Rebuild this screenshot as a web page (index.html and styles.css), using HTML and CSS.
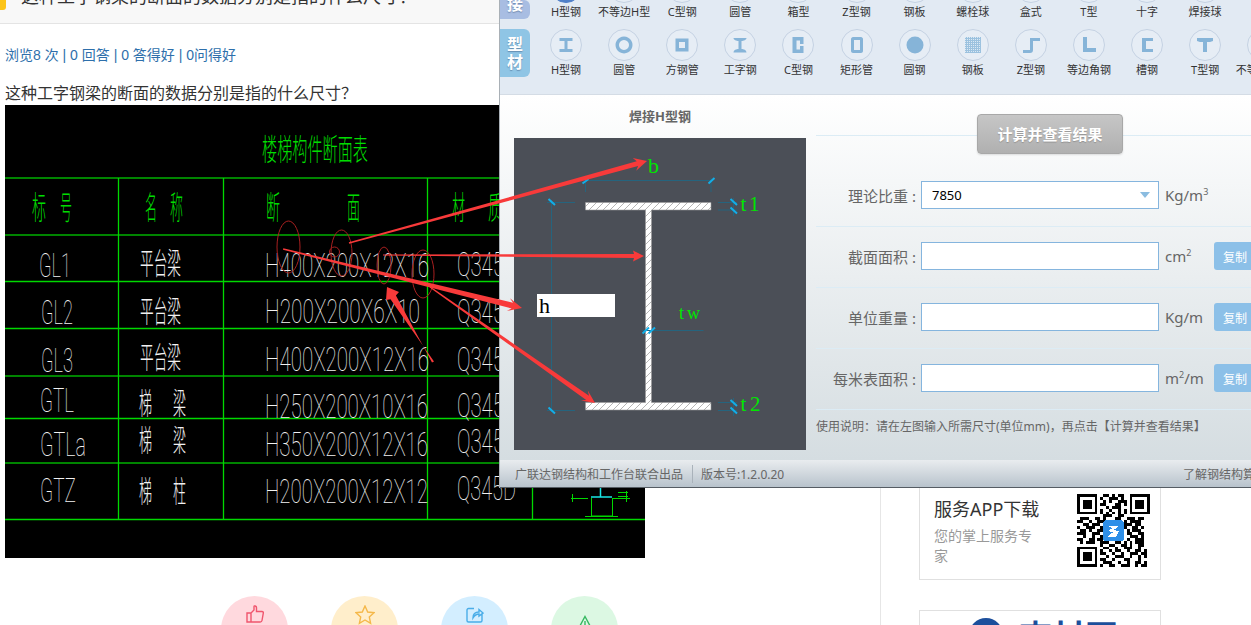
FILE: index.html
```html
<!DOCTYPE html>
<html lang="zh-CN">
<head>
    <meta charset="UTF-8">
    <meta name="viewport" content="width=device-width, initial-scale=1.0">
    <title>焊接H型钢</title>
    <link rel="stylesheet" href="styles.css">
</head>
<body>
    <div class="page">
        <div class="main">
            <div class="q-head">
                <span class="q-flag"></span>
                <span class="q-title">这种工字钢梁的断面的数据分别是指的什么尺寸？</span>
            </div>
            <div class="stats">浏览8 次 | 0 回答 | 0 答得好 | 0问得好</div>
            <p class="question">这种工字钢梁的断面的数据分别是指的什么尺寸？</p>

            <svg class="cad" viewBox="5 105 640 453" width="640" height="453">
                <rect x="5" y="105" width="640" height="453" fill="#000"/>
                <text class="cad-green" x="262" y="160" font-size="30" textLength="106" lengthAdjust="spacingAndGlyphs">楼梯构件断面表</text>

                <g class="line-dark">
                    <path d="M5 178H645M5 235H645M5 376H645M5 463H645"/>
                </g>
                <g class="line-bright">
                    <path d="M5 281.500H645M5 328.500H645M5 418.500H645M5 519.500H645"/>
                    <path d="M118.500 178V519M223.500 178V519M427.500 178V519M532.500 178V519"/>
                </g>

                <g class="cad-green" font-size="32">
                    <text x="32" y="219" textLength="14" lengthAdjust="spacingAndGlyphs">标</text>
                    <text x="60" y="219" textLength="12" lengthAdjust="spacingAndGlyphs">号</text>
                    <text x="145" y="219" textLength="12" lengthAdjust="spacingAndGlyphs">名</text>
                    <text x="170" y="219" textLength="13" lengthAdjust="spacingAndGlyphs">称</text>
                    <text x="266" y="219" textLength="14" lengthAdjust="spacingAndGlyphs">断</text>
                    <text x="347" y="219" textLength="13" lengthAdjust="spacingAndGlyphs">面</text>
                    <text x="452" y="219" textLength="13" lengthAdjust="spacingAndGlyphs">材</text>
                    <text x="488" y="219" textLength="15" lengthAdjust="spacingAndGlyphs">质</text>
                </g>

                <g class="cad-white" font-size="33">
                    <text x="39" y="277" textLength="32" lengthAdjust="spacingAndGlyphs">GL1</text>
                    <text x="41" y="324" textLength="32" lengthAdjust="spacingAndGlyphs">GL2</text>
                    <text x="41" y="372" textLength="32" lengthAdjust="spacingAndGlyphs">GL3</text>
                    <text x="40" y="412" textLength="34" lengthAdjust="spacingAndGlyphs">GTL</text>
                    <text x="40" y="456" textLength="46" lengthAdjust="spacingAndGlyphs">GTLa</text>
                    <text x="40" y="502" textLength="36" lengthAdjust="spacingAndGlyphs">GTZ</text>

                    <text x="265" y="277" textLength="164" lengthAdjust="spacingAndGlyphs">H400X200X12X16</text>
                    <text x="265" y="323" textLength="155" lengthAdjust="spacingAndGlyphs">H200X200X6X10</text>
                    <text x="265" y="371" textLength="164" lengthAdjust="spacingAndGlyphs">H400X200X12X16</text>
                    <text x="265" y="418" textLength="163" lengthAdjust="spacingAndGlyphs">H250X200X10X16</text>
                    <text x="265" y="456" textLength="163" lengthAdjust="spacingAndGlyphs">H350X200X12X16</text>
                    <text x="265" y="503" textLength="163" lengthAdjust="spacingAndGlyphs">H200X200X12X12</text>

                    <text x="457" y="276" textLength="59" lengthAdjust="spacingAndGlyphs">Q345B</text>
                    <text x="457" y="323" textLength="59" lengthAdjust="spacingAndGlyphs">Q345B</text>
                    <text x="457" y="371" textLength="59" lengthAdjust="spacingAndGlyphs">Q345B</text>
                    <text x="457" y="417" textLength="59" lengthAdjust="spacingAndGlyphs">Q345B</text>
                    <text x="457" y="453" textLength="59" lengthAdjust="spacingAndGlyphs">Q345B</text>
                    <text x="457" y="500" textLength="59" lengthAdjust="spacingAndGlyphs">Q345D</text>
                </g>

                <g class="cad-white cad-cn" font-size="30">
                    <text x="140" y="274" textLength="41" lengthAdjust="spacingAndGlyphs">平台梁</text>
                    <text x="140" y="322" textLength="41" lengthAdjust="spacingAndGlyphs">平台梁</text>
                    <text x="140" y="368" textLength="41" lengthAdjust="spacingAndGlyphs">平台梁</text>
                    <text x="139" y="414" textLength="13" lengthAdjust="spacingAndGlyphs">梯</text>
                    <text x="173" y="414" textLength="13" lengthAdjust="spacingAndGlyphs">梁</text>
                    <text x="139" y="451" textLength="13" lengthAdjust="spacingAndGlyphs">梯</text>
                    <text x="173" y="451" textLength="13" lengthAdjust="spacingAndGlyphs">梁</text>
                    <text x="139" y="502" textLength="13" lengthAdjust="spacingAndGlyphs">梯</text>
                    <text x="173" y="502" textLength="13" lengthAdjust="spacingAndGlyphs">柱</text>
                </g>

                <path class="line-thin" d="M571 498.500H588M612 498.500H630M591.500 498V516H612.500V498M585 516.500H618M572.500 494V502M626.500 491V502M618 492.500H628M618 496.500H628"/>
                <path d="M591 497H612M600.500 488V497" stroke="#19e6e6" stroke-width="1.500" fill="none"/>
            </svg>

            <div class="actions">
                <div class="act act-like">
                    <svg viewBox="0 0 18 18" width="18" height="18"><path d="M1 8h4v9H1zM5 8l3-3V1.500c0-1 2.500-1 2.500 1V6.500H16c1 0 1.500 .8 1.300 1.700l-1.300 7.300c-.2 1-1 1.500-1.800 1.500H5"/></svg>
                </div>
                <div class="act act-star">
                    <svg viewBox="0 0 20 20" width="20" height="20"><path d="M10 1l2.700 6 6.300 .7-4.700 4.300 1.300 6.300-5.600-3.300-5.600 3.300 1.300-6.300L1 7.700 7.300 7z"/></svg>
                </div>
                <div class="act act-share">
                    <svg viewBox="0 0 18 16" width="18" height="16"><path d="M8 1.500H2.500c-.8 0-1.500 .7-1.500 1.500v10.500c0 .8 .7 1.500 1.500 1.500h12c.8 0 1.500-.7 1.500-1.500V7M7 11c0-4 2.500-6 6-6V2.500L17 6l-4 3V7c-2.500 0-4.500 1.500-6 4z"/></svg>
                </div>
                <div class="act act-warn">
                    <svg viewBox="0 0 16 16" width="16" height="16"><path d="M8 1.500L15 14.500H1zM8 6v5M8 12v1"/></svg>
                </div>
            </div>
        </div>

        <div class="side">
            <div class="app-card">
                <div class="app-text">
                    <h3>服务APP下载</h3>
                    <p>您的掌上服务专家</p>
                </div>
                <svg class="qr" viewBox="0 0 25 25" width="73" height="73">
                    <path fill-rule="evenodd" d="M0 0h7v7h-7zM1 1v5h5v-5zM2 2h3v3h-3zM18 0h7v7h-7zM19 1v5h5v-5zM20 2h3v3h-3zM0 18h7v7h-7zM1 19v5h5v-5zM2 20h3v3h-3z"/>
                    <path class="qr-bits" d="M9 .5h2m1 0h1m1 0h2M8 1.500h1m2 0h3m1 0h1M9 2.500h1m1 0h1m2 0h3M8 3.500h2m3 0h2m1 0h1M10 4.500h1m1 0h3M8 5.500h1m2 0h1m2 0h1m1 0h1M8 6.500h1m1 0h1m1 0h1m1 0h1m1 0h1M9 7.500h3m2 0h2M1 8.500h3m2 0h2m1 0h1m3 0h2m2 0h3m1 0h2M0 9.500h2m2 0h1m2 0h3m3 0h1m2 0h1m1 0h4M2 10.500h2m1 0h3m2 0h2m4 0h3m1 0h2M0 11.500h1m2 0h3m2 0h1m7 0h1m2 0h2m1 0h1M1 12.500h2m1 0h1m2 0h2m8 0h1m1 0h3M0 13.500h3m2 0h3m9 0h2m2 0h2M2 14.500h1m2 0h1m2 0h2m8 0h3m1 0h1M0 15.500h2m2 0h2m1 0h2m8 0h1m2 0h3M1 16.500h1m1 0h3m2 0h3m2 0h2m1 0h1m1 0h1m1 0h3M8 17.500h1m2 0h2m2 0h2m1 0h1m2 0h2M9 18.500h2m2 0h1m2 0h3m2 0h1M8 19.500h1m2 0h1m1 0h2m2 0h1m2 0h2m1 0h1M8 20.500h2m2 0h1m2 0h1m2 0h3m1 0h2M10 21.500h1m2 0h3m2 0h1m2 0h1m1 0h1M8 22.500h2m2 0h1m3 0h2m3 0h1M9 23.500h3m2 0h1m2 0h1m2 0h2m1 0h1M8 24.500h1m2 0h2m2 0h3m2 0h1m1 0h2"/>
                    <rect x="9" y="9" width="7" height="7.200" rx="1" fill="#2e8fe8"/>
                    <path d="M10.500 10.800h4l-2 1.600 2 .2-1 2h-3l1.800-1.500-1.800-.4 1.600-1z" fill="#fff"/>
                </svg>
            </div>
            <div class="brand-card">
                <svg viewBox="0 0 34 34" width="34" height="34"><circle cx="17" cy="17" r="13" fill="none" stroke="#1c4f9c" stroke-width="8"/></svg>
                <span class="brand-name">查材网</span>
            </div>
        </div>
    </div>

    <!-- calculator window sits over the page -->
    <div class="win">
        <div class="shapes">
            <div class="tabs">
                <div class="tab tab-join">接</div>
                <div class="tab tab-profile">型<br>材</div>
            </div>
            <div class="shape-rows">
                <div class="shape-row shape-row-cut">
                    <div class="shape"><span class="ring ring-on"></span><span>H型钢</span></div>
                    <div class="shape"><span class="ring"></span><span>不等边H型</span></div>
                    <div class="shape"><span class="ring"></span><span>C型钢</span></div>
                    <div class="shape"><span class="ring"></span><span>圆管</span></div>
                    <div class="shape"><span class="ring"></span><span>箱型</span></div>
                    <div class="shape"><span class="ring"></span><span>Z型钢</span></div>
                    <div class="shape"><span class="ring"></span><span>钢板</span></div>
                    <div class="shape"><span class="ring"></span><span>螺栓球</span></div>
                    <div class="shape"><span class="ring"></span><span>盒式</span></div>
                    <div class="shape"><span class="ring"></span><span>T型</span></div>
                    <div class="shape"><span class="ring"></span><span>十字</span></div>
                    <div class="shape"><span class="ring"></span><span>焊接球</span></div>
                </div>
                <div class="shape-row">
                    <div class="shape"><span class="ring"><svg viewBox="0 0 32 32"><path d="M9.500 9h13v3h-5v8h5v3h-13v-3h5v-8h-5z"/></svg></span><span>H型钢</span></div>
                    <div class="shape"><span class="ring"><svg viewBox="0 0 32 32"><path fill-rule="evenodd" d="M16 7.500a8.500 8.500 0 1 0 .01 0zM16 11a5 5 0 1 1-.01 0z"/></svg></span><span>圆管</span></div>
                    <div class="shape"><span class="ring"><svg viewBox="0 0 32 32"><path fill-rule="evenodd" d="M9.500 9.500h13v13h-13zM13 13v6h6v-6z"/></svg></span><span>方钢管</span></div>
                    <div class="shape"><span class="ring"><svg viewBox="0 0 32 32"><path d="M9.500 9h13c0 2-3 3-5 3v8c2 0 5 1 5 3.500h-13c0-2.500 3-3.500 5-3.500v-8c-2 0-5-1-5-3z"/></svg></span><span>工字钢</span></div>
                    <div class="shape"><span class="ring"><svg viewBox="0 0 32 32"><path d="M10.500 8h11v7h-3.500v-3.500h-3.500v9h3.500v-3.500h3.500v7h-11z"/></svg></span><span>C型钢</span></div>
                    <div class="shape"><span class="ring"><svg viewBox="0 0 32 32"><path fill-rule="evenodd" d="M12 8h8c1 0 2 1 2 2v12c0 1-1 2-2 2h-8c-1 0-2-1-2-2V10c0-1 1-2 2-2zM13 11v10h6V11z"/></svg></span><span>矩形管</span></div>
                    <div class="shape"><span class="ring"><svg viewBox="0 0 32 32"><circle cx="16" cy="16" r="8.500"/></svg></span><span>圆钢</span></div>
                    <div class="shape"><span class="ring"><svg viewBox="0 0 32 32"><defs><pattern id="dots" width="2" height="2" patternUnits="userSpaceOnUse"><rect width="2" height="2" fill="#9cc2df"/><rect width="1" height="1" fill="#dbe9f4"/></pattern></defs><rect x="8" y="8" width="16" height="16" fill="url(#dots)"/></svg></span><span>钢板</span></div>
                    <div class="shape"><span class="ring"><svg viewBox="0 0 32 32"><path d="M15 9h10v3h-7v9c0 2-1 3-3 3H8v-3h7z"/></svg></span><span>Z型钢</span></div>
                    <div class="shape"><span class="ring"><svg viewBox="0 0 32 32"><path d="M10 8h4v11h9v4H10z"/></svg></span><span>等边角钢</span></div>
                    <div class="shape"><span class="ring"><svg viewBox="0 0 32 32"><path d="M11 9h11v3h-7v8h7v3H11z"/></svg></span><span>槽钢</span></div>
                    <div class="shape"><span class="ring"><svg viewBox="0 0 32 32"><path d="M8 9h16v3c-2 1-4 1-6 1v10h-4V13c-2 0-4 0-6-1z"/></svg></span><span>T型钢</span></div>
                    <div class="shape"><span class="ring"></span><span>不等边角钢</span></div>
                </div>
            </div>
        </div>

        <div class="calc">
            <div class="figure">
                <div class="figure-title">焊接H型钢</div>
                <svg class="section" viewBox="0 0 292 312" width="292" height="312">
                    <defs>
                        <pattern id="hatch" width="7" height="7" patternUnits="userSpaceOnUse">
                            <rect width="7" height="7" fill="#fff"/>
                            <path d="M0 7L7 0" stroke="#b5b5b5" stroke-width="1"/>
                        </pattern>
                    </defs>
                    <path class="steel" d="M71.500 64.500H197V72H137.500V264.500H197V272H71.500V264.500H131.500V72H71.500z"/>
                    <path class="dim" d="M71.500 42.500H197M71.500 40V54M197 40V54M37.500 62V274M33 64.500H61M33 272.500H61M204 64.500H223M204 72H223M219.500 60V78M204 264.500H223M204 272.500H223M219.500 260V278M128 192.500H189.500"/>
                    <path class="tick" d="M68.500 45.500L74.500 41M194.500 45.500L200.500 40M34.500 61L41 67M34.500 269.500L41 275.500M216.500 61L223 67M216.500 69.500L223 75.500M216.500 262L223 268M216.500 269.500L223 275.500M128.500 195.500L135 189.500M134.500 195.500L141 189.500"/>
                    <text class="dim-txt" x="134" y="35" font-size="22">b</text>
                    <text class="dim-txt" x="226.500" y="73" font-size="21" textLength="19" lengthAdjust="spacing">t1</text>
                    <text class="dim-txt" x="226.500" y="273" font-size="21" textLength="20" lengthAdjust="spacing">t2</text>
                    <text class="dim-txt" x="165" y="181" font-size="18" textLength="21" lengthAdjust="spacing">tw</text>
                    <rect x="23" y="156" width="78" height="23" fill="#fff"/>
                    <text class="h-txt" x="25" y="175" font-size="22">h</text>
                </svg>
            </div>
            <div class="form">
                <div class="form-top"><button class="run-btn">计算并查看结果</button></div>
                <div class="row row-first">
                    <label>理论比重 :</label>
                    <div class="combo"><input type="text" value="7850"></div>
                    <span class="unit">Kg/m<sup>3</sup></span>
                </div>
                <div class="row">
                    <label>截面面积 :</label>
                    <input type="text">
                    <span class="unit">cm<sup>2</sup></span>
                    <button class="copy-btn">复制</button>
                </div>
                <div class="row">
                    <label>单位重量 :</label>
                    <input type="text">
                    <span class="unit">Kg/m</span>
                    <button class="copy-btn">复制</button>
                </div>
                <div class="row">
                    <label>每米表面积 :</label>
                    <input type="text">
                    <span class="unit">m<sup>2</sup>/m</span>
                    <button class="copy-btn">复制</button>
                </div>
                <div class="help">使用说明：请在左图输入所需尺寸(单位mm)，再点击【计算并查看结果】</div>
            </div>
        </div>

        <div class="foot">
            <span class="foot-by">广联达钢结构和工作台联合出品</span>
            <span>版本号:1.2.0.20</span>
            <span class="foot-more">了解钢结构算量</span>
        </div>
    </div>

    <!-- red markup drawn on top of the screenshot -->
    <svg class="markup" viewBox="0 0 1251 625" width="1251" height="625">
        <g class="circles">
            <ellipse cx="288.500" cy="247" rx="11.500" ry="26"/>
            <ellipse cx="341.500" cy="253" rx="10.500" ry="23"/>
            <circle cx="334.500" cy="252" r="5"/>
            <ellipse cx="384" cy="265.500" rx="7" ry="18.500"/>
            <ellipse cx="423" cy="274" rx="11" ry="24"/>
        </g>
        <g class="arrows">
            <polygon points="349.200,243.700 638.100,166.100 636.200,170.700 647,161 632.800,158.100 636.700,161.300 348.800,242.300"/>
            <polygon points="383,255.500 634,258 633,261.500 644,256 633,250.500 634,254 383,254.500"/>
            <polygon points="283,249.700 511.600,308.500 506.800,310.900 522,308 510,298.300 513,302.700 283.300,248.300"/>
            <polygon points="432,362.500 395.900,295.600 399,292 387,287 386,300 390.500,299.300 434,361.500"/>
            <polygon points="429.600,287.600 586.200,399.900 580.900,400.400 595,403 587.800,390.600 589,395.800 430.400,286.400"/>
        </g>
    </svg>
</body>
</html>
```

FILE: styles.css
```css
html, body {
    margin: 0;
    height: 625px;
    overflow: hidden;
}
body {
    position: relative;
    background: #fff;
    font-family: "Noto Sans", "Noto Sans CJK SC", sans-serif;
    color: #333;
}
.page {
    display: flex;
    height: 625px;
}
.main {
    width: 880px;
    flex-shrink: 0;
    border-right: 1px solid #e6e6e6;
}
.q-head {
    display: flex;
    align-items: flex-end;
    height: 23px;
    background: #f8f8f8;
    border-bottom: 1px solid #e4e4e4;
}
.q-flag {
    align-self: flex-start;
    width: 6px;
    height: 10px;
    background: #fcc419;
    border-radius: 0 0 3px 0;
}
.q-title {
    margin-left: 15px;
    margin-bottom: 17px;
    font-size: 18px;
    line-height: 20px;
    white-space: nowrap;
    color: #333;
}
.stats {
    margin: 21px 0 0 5px;
    font-family: "Liberation Sans", "Noto Sans CJK SC", sans-serif;
    font-size: 14px;
    line-height: 20px;
    color: #2e6fab;
}
.question {
    margin: 17px 0 1px 5px;
    font-size: 16px;
    line-height: 22px;
    color: #333;
}
.cad {
    display: block;
    margin-left: 5px;
}
.cad-green {
    font-family: "Noto Sans CJK SC", sans-serif;
    font-weight: 200;
    fill: #00dd00;
}
.cad-white {
    font-family: Roboto, "Noto Sans CJK SC", sans-serif;
    font-weight: 100;
    fill: #f2f2f2;
}
.cad-cn {
    font-family: "Noto Sans CJK SC", sans-serif;
    font-weight: 200;
}
.line-dark path {
    fill: none;
    stroke: #008400;
    stroke-width: 2;
}
.line-bright path {
    fill: none;
    stroke: #00d800;
    stroke-width: 1.3;
}
.line-thin {
    fill: none;
    stroke: #00d800;
    stroke-width: 1;
}

.actions {
    display: flex;
    gap: 43px;
    height: 29px;
    margin-top: 38px;
    padding-left: 221px;
    overflow: hidden;
}
.act {
    display: flex;
    justify-content: center;
    flex-shrink: 0;
    width: 67px;
    height: 67px;
    padding-top: 9px;
    box-sizing: border-box;
    border-radius: 50%;
}
.act svg {
    fill: none;
    stroke-width: 1.4;
}
.act-like { background: #ffd9de; }
.act-like svg { stroke: #f0566e; }
.act-star { background: #ffeecb; }
.act-star svg { stroke: #f5b84a; }
.act-share { background: #d3eeff; }
.act-share svg { stroke: #4aade8; margin-top: 2px; }
.act-warn { background: #dcf8e3; }
.act-warn svg { stroke: #35b860; margin-top: 10px; }

.side {
    padding: 480px 0 0 38px;
}
.app-card {
    display: flex;
    width: 242px;
    height: 100px;
    box-sizing: border-box;
    padding: 13px 10px 0 14px;
    border: 1px solid #e0e0e0;
}
.app-text {
    width: 110px;
    margin-right: 33px;
}
.app-text h3 {
    margin: 4px 0 0;
    font-size: 18px;
    font-weight: 400;
    line-height: 22px;
    white-space: nowrap;
    color: #333;
}
.app-text p {
    margin: 6px 0 0;
    font-size: 14px;
    line-height: 20px;
    color: #999;
}
.qr {
    flex-shrink: 0;
    shape-rendering: crispEdges;
}
.qr-bits {
    fill: none;
    stroke: #000;
    stroke-width: 1;
}
.brand-card {
    display: flex;
    align-items: flex-start;
    gap: 16px;
    width: 242px;
    height: 15px;
    overflow: hidden;
    box-sizing: border-box;
    margin-top: 30px;
    padding: 7px 0 0 49px;
    border: 1px solid #e0e0e0;
    border-bottom: none;
}
.brand-name {
    font-size: 33px;
    font-weight: 700;
    line-height: 38px;
    color: #1c4f9c;
}

/* window */
.win {
    position: absolute;
    left: 500px;
    top: 0;
    width: 780px;
    height: 488px;
    display: flex;
    flex-direction: column;
    box-shadow: -1px 0 0 #a9b0b6;
}
.shapes {
    display: flex;
    flex-shrink: 0;
    gap: 7px;
    height: 94px;
    background: #e2eaf3;
    border-bottom: 1px solid #d4dce5;
    font-size: 11px;
    overflow: hidden;
}
.tabs {
    display: flex;
    flex-direction: column;
    flex-shrink: 0;
    gap: 10px;
    width: 30px;
}
.tab {
    display: flex;
    align-items: center;
    justify-content: center;
    text-align: center;
    font-size: 16px;
    font-weight: 700;
    line-height: 18px;
    color: #fff;
    border-radius: 0 6px 6px 0;
    text-shadow: 0 1px 1px rgba(60, 90, 130, 0.5);
}
.tab-join {
    align-items: flex-end;
    height: 19px;
    padding-bottom: 6px;
    box-sizing: border-box;
    background: #a8bde2;
}
.tab-profile {
    height: 48px;
    background: #8fc5e5;
}
.shape-rows {
    display: flex;
    flex-direction: column;
    gap: 9px;
}
.shape-row {
    display: flex;
}
.shape-row-cut {
    height: 20px;
    align-items: flex-end;
}
.shape {
    display: flex;
    flex-direction: column;
    align-items: center;
    flex-shrink: 0;
    width: 58.1px;
    color: #333;
    line-height: 16px;
    white-space: nowrap;
}
.ring {
    display: block;
    width: 32px;
    height: 32px;
    margin-bottom: 1px;
    box-sizing: border-box;
    border: 1px solid #c5d2e3;
    border-radius: 50%;
    background: #e6edf5;
}
.ring-on {
    background: #4f7fc8;
    border-color: #4f7fc8;
}
.ring svg {
    display: block;
    width: 32px;
    height: 32px;
    margin: -1px;
    fill: #86b4d8;
}

.calc {
    display: flex;
    flex: 1;
    min-height: 0;
    background: linear-gradient(#fff, #d5dde1);
}
.figure {
    width: 302px;
    flex-shrink: 0;
    padding-left: 14px;
}
.figure-title {
    width: 292px;
    height: 43px;
    text-align: center;
    font-size: 13px;
    font-weight: 700;
    line-height: 43px;
    color: #666;
}
.section {
    display: block;
    background: #4b4f57;
}
.steel {
    fill: url(#hatch);
    stroke: #999;
    stroke-width: 0.6;
}
.dim {
    fill: none;
    stroke: #25647e;
    stroke-width: 1;
}
.tick {
    fill: none;
    stroke: #12aee8;
    stroke-width: 2;
}
.dim-txt {
    font-family: "Liberation Serif", serif;
    fill: #00e600;
}
.h-txt {
    font-family: "Liberation Serif", serif;
    fill: #000;
}

.form {
    flex: 1;
    font-size: 15px;
    color: #666;
}
.form-top {
    display: flow-root;
    height: 40px;
    border-bottom: 1px solid #dcecf5;
}
.run-btn {
    display: block;
    width: 146px;
    height: 40px;
    margin: 19px 0 0 161px;
    padding: 0 0 2px;
    font: 700 15px "Noto Sans", "Noto Sans CJK SC", sans-serif;
    color: #fff;
    background: linear-gradient(#c6c6c6, #b0b0b0);
    border: 1px solid #a8a8a8;
    border-radius: 4px;
    text-shadow: 0 1px 1px rgba(0, 0, 0, 0.2);
    box-shadow: 0 1px 2px rgba(0, 0, 0, 0.12);
}
.row {
    display: flex;
    align-items: center;
    height: 28px;
    padding: 15px 0 17px;
    border-bottom: 1px solid #dcecf5;
}
.row-first {
    padding-top: 45px;
}
.row label {
    width: 100px;
    margin-right: 5px;
    text-align: right;
    white-space: nowrap;
}
.row input {
    width: 238px;
    height: 28px;
    padding: 0 10px;
    box-sizing: border-box;
    border: 1px solid #85b5de;
    background: #fff;
    font: 13px "Noto Sans", sans-serif;
    color: #000;
}
.combo {
    position: relative;
    height: 28px;
}
.combo::after {
    content: "";
    position: absolute;
    right: 9px;
    top: 11px;
    border-left: 5px solid transparent;
    border-right: 5px solid transparent;
    border-top: 6px solid #8bbce0;
}
.unit {
    width: 49px;
    margin-left: 6px;
    white-space: nowrap;
    line-height: 20px;
}
.unit sup {
    font-size: 9px;
    line-height: 0;
}
.copy-btn {
    width: 42px;
    height: 28px;
    padding: 0;
    font: 12px "Noto Sans CJK SC", sans-serif;
    color: #fff;
    background: #8cc0e8;
    border: none;
    border-radius: 3px;
}
.help {
    padding-top: 8px;
    font-size: 12px;
    line-height: 17px;
    color: #666;
    white-space: nowrap;
}

.foot {
    display: flex;
    align-items: center;
    flex-shrink: 0;
    height: 27px;
    padding: 0 13px 0 15px;
    font-size: 12px;
    color: #666;
    background: linear-gradient(#e9ecef, #b8c3cc);
    border-bottom: 1px solid #555c63;
}
.foot-by {
    padding-right: 9px;
    margin-right: 8px;
    border-right: 1px solid #a9b2ba;
}
.foot-more {
    margin-left: auto;
}

.markup {
    position: absolute;
    left: 0;
    top: 0;
    pointer-events: none;
}
.circles * {
    fill: none;
    stroke: #a82020;
    stroke-width: 1;
}
.arrows polygon {
    fill: #f83a3a;
}
```
